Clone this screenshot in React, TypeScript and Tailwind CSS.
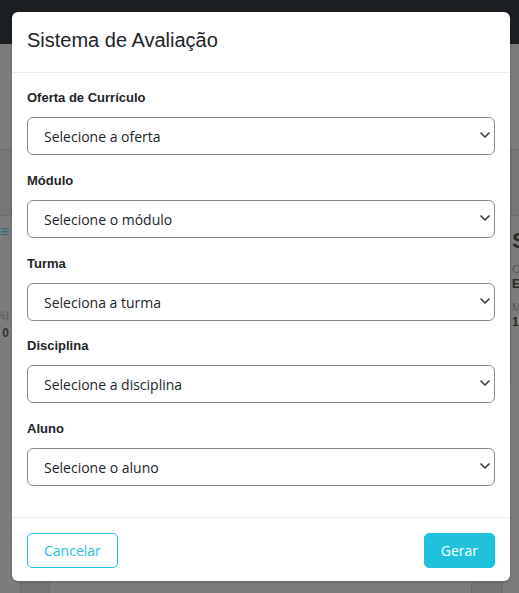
import { ChevronDown } from 'lucide-react';

type TField = {
  label: string;
  placeholder: string;
  gap: string;
};

const fields: TField[] = [
  { label: 'Oferta de Currículo', placeholder: 'Selecione a oferta', gap: 'mb-[15px]' },
  { label: 'Módulo', placeholder: 'Selecione o módulo', gap: 'mb-[15px]' },
  { label: 'Turma', placeholder: 'Seleciona a turma', gap: 'mb-[14px]' },
  { label: 'Disciplina', placeholder: 'Selecione a disciplina', gap: 'mb-[15px]' },
  { label: 'Aluno', placeholder: 'Selecione o aluno', gap: 'mb-[16px]' },
];

const SelectField = ({ label, placeholder, gap }: TField) => {
  return (
    <div className={gap}>
      <label className="block h-[21px] mb-[9px] text-[13px] leading-[21px] font-bold text-[#212529] font-['Liberation_Sans',Arial,sans-serif]">
        {label}
      </label>
      <div className="flex items-center justify-between h-[38px] pl-[16px] pr-[1px] rounded-[6px] border border-[#838d97] bg-white">
        <span className="text-[14px] text-[#212529] font-['Open_Sans',sans-serif]">{placeholder}</span>
        <ChevronDown size={16} strokeWidth={2.4} className="text-[#343a40] -mt-[2px]" />
      </div>
    </div>
  );
};

const Backdrop = () => {
  return (
    <div className="flex flex-col h-full">
      <div className="h-[44px] bg-[#1c1f22]" />
      <div className="h-[106px] border-b border-[#6c6c6c]" />
      <div className="flex justify-between">
        <div className="w-[24px] h-[233px] flex flex-col border-r border-[#6f6f6f]">
          <div className="h-[66px] bg-[#767676] border-b border-[#6c6c6c]" />
          <div className="flex flex-col items-end pt-[8px] pr-[14px] font-['Liberation_Sans',Arial,sans-serif]">
            <span className="text-[16px] font-bold text-[#1a6f78] leading-none">≡</span>
            <span className="mt-[70px] text-[11px] text-[#555] leading-none">%)</span>
            <span className="mt-[6px] text-[12px] font-bold text-[#333] leading-none">0</span>
          </div>
        </div>
        <div className="w-[9px] h-[233px] flex flex-col overflow-hidden border-l border-[#6f6f6f] font-['Liberation_Sans',Arial,sans-serif]">
          <div className="h-[66px] bg-[#767676] border-b border-[#6c6c6c]" />
          <div className="pl-[1px] pt-[14px] flex flex-col">
            <span className="text-[22px] font-bold text-[#2a2a2a] leading-none">S</span>
            <span className="mt-[12px] text-[11px] text-[#555] leading-none">C</span>
            <span className="mt-[3px] text-[12px] font-bold text-[#2a2a2a] leading-none">E</span>
            <span className="mt-[12px] text-[11px] text-[#555] leading-none">M</span>
            <span className="mt-[3px] text-[12px] font-bold text-[#2a2a2a] leading-none">1</span>
          </div>
        </div>
      </div>
      <div className="mt-auto flex justify-between h-[11px] px-[20px]">
        <div className="w-[30px] bg-[#747474] border-x border-[#6c6c6c]" />
        <div className="w-[32px] mr-[-4px] bg-[#747474] border-x border-[#6c6c6c]" />
      </div>
    </div>
  );
};

const App = () => {
  return (
    <div className="relative w-[519px] h-[593px] overflow-hidden bg-[#7c7c7c]">
      <Backdrop />
      <div className="absolute inset-0 pt-[12px] pl-[12px]">
        <div className="w-[498px] bg-white rounded-[6px] shadow-[0_1px_3px_rgba(0,0,0,0.25)] overflow-hidden">
          <div className="h-[61px] pt-[13px] px-[15px] border-b border-[#e9ecef]">
            <h5 className="text-[20px] leading-[30px] text-[#212529] font-['Liberation_Sans',Arial,sans-serif]">
              Sistema de Avaliação
            </h5>
          </div>
          <div className="px-[15px] pt-[14px] pb-[15px]">
            {fields.map((f) => (
              <SelectField key={f.label} label={f.label} placeholder={f.placeholder} gap={f.gap} />
            ))}
          </div>
          <div className="flex justify-between items-start h-[64px] pt-[15px] px-[15px] border-t border-[#e9ecef] font-['Open_Sans',sans-serif]">
            <button className="h-[35px] px-[16px] rounded-[5px] border border-[#22c0dc] text-[14px] text-[#22c0dc] bg-white">
              Cancelar
            </button>
            <button className="h-[35px] px-[16px] rounded-[5px] border border-[#20c1dd] text-[14px] text-white bg-[#20c1dd]">
              Gerar
            </button>
          </div>
        </div>
      </div>
    </div>
  );
};

export default App;
